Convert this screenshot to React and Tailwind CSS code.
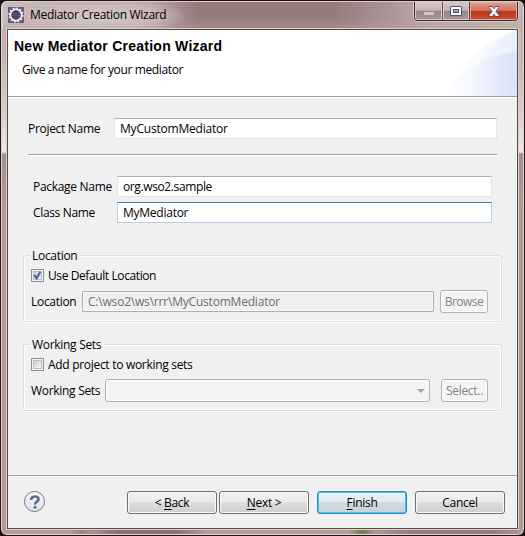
import React from "react";

function Label({ className = "tracking-[-0.3px]", children }) {
  return <span className={`block shrink-0 whitespace-nowrap leading-4 ${className}`}>{children}</span>;
}

function TextField({ className = "", children }) {
  return (
    <div className={`flex h-[21px] items-center rounded-[1px] border pl-[5px] ${className}`}>{children}</div>
  );
}

const idle = "border-[#e2e3ea] border-t-[#abadb3] bg-white";
const focused = "border-[#b5cfe7] border-t-[#3d7bad] bg-white";

function Rule({ className = "" }) {
  return <div className={`h-[2px] shrink-0 border-t border-[#a0a0a0] bg-white ${className}`} />;
}

const plainButton =
  "border-[#707070] bg-[linear-gradient(to_bottom,#f2f2f2,#ebebeb_48%,#dddddd_50%,#cfcfcf)] shadow-[inset_0_0_0_1px_#fafafa]";
const defaultButton =
  "border-[#3a85b0] bg-[linear-gradient(to_bottom,#edf2f5,#e3ebf0_48%,#d2dce3_50%,#c6d1d8)] shadow-[inset_0_0_0_1px_#35c9f5]";

function Button({ className = "", tone = plainButton, children }) {
  return (
    <div className={`flex h-[23px] w-[90px] items-center justify-center rounded-[3px] border ${tone} ${className}`}>
      {children}
    </div>
  );
}

function DisabledButton({ className = "", children }) {
  return (
    <div className={`flex h-[23px] items-center justify-center rounded-[3px] border border-[#adb2b5] bg-[#f4f4f4] text-[#838383] shadow-[inset_0_0_0_1px_#fcfcfc] ${className}`}>
      {children}
    </div>
  );
}

function Group({ title, children }) {
  return (
    <div className="relative ml-[15px] h-[67px] w-[479px] rounded-[3px] border border-[#d5dfe5] shadow-[inset_0_0_0_1px_#fff,0_1px_0_#fff]">
      <div className="absolute -top-2 left-[6px] bg-[#f0f0f0] pl-[2px] pr-[3px]">
        <Label>{title}</Label>
      </div>
      {children}
    </div>
  );
}

function Checkbox({ checked }) {
  return (
    <div className="h-[13px] w-[13px] shrink-0 border border-[#8e8f8f] bg-[#f4f4f4] p-px">
      <div className="h-[9px] w-[9px] border border-[#b9bec5] bg-linear-to-br from-[#cbd0d6] to-[#f6f6f6]">
        {checked && (
          <svg viewBox="0 0 9 9" className="-mt-px -ml-px block h-[9px] w-[9px] overflow-visible">
            <path d="M1.2 3.8 L3.7 7.3 L7.4 0.7" fill="none" stroke="#4b61a0" strokeWidth="2.1" />
          </svg>
        )}
      </div>
    </div>
  );
}

function EclipseIcon() {
  return (
    <svg viewBox="0 0 16 16" className="h-4 w-4 shrink-0">
      <rect width="16" height="16" fill="#67568d" />
      <circle cx="8" cy="8" r="6.9" fill="none" stroke="#f3f2f0" strokeWidth="1.4" strokeDasharray="1.9 1.71" />
      <circle cx="8" cy="8" r="5.6" fill="#453b58" stroke="#f0efed" strokeWidth="1.7" />
      <path d="M4 6.4h8M3.7 8.4h8.6M4.2 10.2h7.6" stroke="#73658b" strokeWidth=".7" />
    </svg>
  );
}

function WindowControls() {
  return (
    <div className="mr-[5px] flex h-[19px] w-[104px] overflow-hidden rounded-b-[4px] border border-t-0 border-[#352e30] shadow-[0_0_0_1px_#d8c9c9]">
      <div className="flex w-[28px] items-end justify-center border-r border-[#5d5254] bg-[linear-gradient(to_bottom,#d8c9ca,#c2b2b4_46%,#988589_52%,#a89599)] pb-[5px] shadow-[inset_0_0_0_1px_#d8cccc]">
        <div className="h-[3px] w-[10px] bg-[#d0c8c9]" />
      </div>
      <div className="flex w-[27px] items-center justify-center border-r border-[#5d3434] bg-[linear-gradient(to_bottom,#d8c9ca,#c2b2b4_46%,#988589_52%,#a89599)] shadow-[inset_0_0_0_1px_#d8cccc]">
        <svg viewBox="0 0 12 10" className="h-[10px] w-3">
          <rect x=".5" y=".5" width="11" height="9" rx=".5" fill="#f7f7f7" stroke="#50546a" />
          <rect x="3.5" y="3.5" width="5" height="3" fill="#a99b9f" stroke="#50546a" />
        </svg>
      </div>
      <div className="flex grow items-center justify-center bg-[linear-gradient(to_bottom,#e0a091,#d2715c_47%,#ba351a_53%,#cc4e30)] shadow-[inset_0_0_0_1px_#e2a99c]">
        <svg viewBox="0 0 12 11" className="h-[11px] w-3">
          <path d="M1 .5h3.500L6 2.700 7.500.5H11v1L8 5.300l3 3.900v1.300H7.500L6 8.200l-1.500 2.300H1V9.200l3-3.900-3-3.800z" fill="#f5f5f5" stroke="#5c5265" />
        </svg>
      </div>
    </div>
  );
}

function HeaderBanner() {
  return (
    <svg viewBox="0 0 80 66" className="h-[66px] w-20">
      <defs>
        <linearGradient id="sweep" gradientUnits="userSpaceOnUse" x1="8" x2="80">
          <stop offset="0" stopColor="#ffffff" />
          <stop offset="1" stopColor="#f0f4fc" />
        </linearGradient>
        <linearGradient id="crest" gradientUnits="userSpaceOnUse" x1="36" x2="80">
          <stop offset="0" stopColor="#f8faff" />
          <stop offset="1" stopColor="#e8eefa" />
        </linearGradient>
        <linearGradient id="hill" gradientUnits="userSpaceOnUse" x1="8" x2="80">
          <stop offset="0" stopColor="#ffffff" />
          <stop offset=".4" stopColor="#f3f6fd" />
          <stop offset=".85" stopColor="#dfe6f8" />
          <stop offset="1" stopColor="#dbe2f6" />
        </linearGradient>
      </defs>
      <path d="M10 66C20 38 45 9 80 1V66z" fill="url(#sweep)" />
      <path d="M36 46C48 22 62 5 80 1V66H36z" fill="url(#crest)" />
      <path d="M5 66C24 43 50 22 80 22V66z" fill="url(#hill)" />
    </svg>
  );
}

function HelpIcon() {
  return (
    <div className="flex h-[21px] w-[21px] items-center justify-center rounded-full border-[1.5px] border-[#66799b] bg-linear-to-b from-[#f8f8f8] to-[#e2e2e2]">
      <svg viewBox="0 0 12 14" className="h-[14px] w-3">
        <path d="M2.200 4.900C2.200 0.600 9.600 0.500 9.600 4.300C9.600 6.700 6 6.500 6 9.600" fill="none" stroke="#5c7196" strokeWidth="2.600" />
        <circle cx="6" cy="12.300" r="1.500" fill="#5c7196" />
      </svg>
    </div>
  );
}

export default function App() {
  return (
    <div className="h-[536px] w-[525px] overflow-hidden bg-[#1c1517] font-['Open_Sans','Noto_Sans',sans-serif] text-[12px] text-black">
      <div className="flex h-[536px] w-[525px] flex-col rounded-[7px] border border-[#1e1618] bg-[linear-gradient(to_bottom,#c1afae_0px,#c6b5b3_60px,#d8cbc8_110px,#f1eae7_151px,#a59092_153px,#b49b95_220px,#b49b95_100%)] pl-px shadow-[inset_0_0_0_1px_#e0d3d0]">
        <div className="mr-px flex h-[28px] shrink-0 items-start justify-between rounded-t-[5px] border-t border-l border-[#d9cccb] bg-[radial-gradient(ellipse_90px_18px_at_95px_14px,#d4c8c6_0%,#c9bab9_60%,transparent_100%),linear-gradient(to_bottom,transparent_60%,#b8a5a066),linear-gradient(to_right,#c9baba_0px,#b7a3a3_150px,#967b7b_195px,#967b7b_330px,#bda9aa_430px,#c3b2b1_100%)]">
          <div className="flex gap-[6px] pt-[5px] pl-[5px]">
            <EclipseIcon />
            <Label>Mediator Creation Wizard</Label>
          </div>
          <WindowControls />
        </div>

        <div className="ml-[5px] flex h-[500px] w-[511px] shrink-0 flex-col border border-[#5a4a4b] bg-[#f0f0f0] shadow-[0_0_0_1px_#dccfcd]">
          <div className="flex h-[66px] shrink-0 justify-between bg-white">
            <div className="pt-[8px] pl-[6px]">
              <Label className="font-['Liberation_Sans',Arial,sans-serif] text-[14px] font-bold tracking-[0.25px]">New Mediator Creation Wizard</Label>
              <Label className="mt-[8px] pl-2 tracking-[-0.36px]">Give a name for your mediator</Label>
            </div>
            <HeaderBanner />
          </div>
          <Rule />

          <div className="mt-[20px] flex items-center pl-[20px]">
            <Label className="w-[86px] tracking-[-0.3px]">Project Name</Label>
            <TextField className={`w-[383px] ${idle}`}><Label className="tracking-[-0.2px]">MyCustomMediator</Label></TextField>
          </div>
          <Rule className="mt-[15px] ml-5 w-[469px]" />

          <div className="mt-[20px] flex items-center pl-[25px]">
            <Label className="w-[84px] tracking-[-0.3px]">Package Name</Label>
            <TextField className={`w-[375px] ${idle}`}><Label className="tracking-[-0.38px]">org.wso2.sample</Label></TextField>
          </div>
          <div className="mt-[5px] flex items-center pl-[25px]">
            <Label className="w-[84px] tracking-[-0.35px]">Class Name</Label>
            <TextField className={`w-[375px] ${focused}`}><Label className="tracking-[-0.25px]">MyMediator</Label></TextField>
          </div>

          <div className="mt-[32px]">
            <Group title="Location">
              <div className="mt-[13px] flex h-[13px] items-center gap-1 pl-[7px]">
                <Checkbox checked />
                <Label className="tracking-[-0.4px]">Use Default Location</Label>
              </div>
              <div className="mt-[8px] flex items-center pl-[7px]">
                <Label className="w-[51px] tracking-[-0.3px]">Location</Label>
                <TextField className="w-[352px] border-[#afafaf] bg-[#f0f0f0] text-[#6d6d6d] shadow-[inset_0_0_0_1px_#fafafa]"><Label className="tracking-[-0.2px]">C:\wso2\ws\rrr\MyCustomMediator</Label></TextField>
                <DisabledButton className="ml-[6px] w-[48px]"><Label className="tracking-[-0.5px]">Browse</Label></DisabledButton>
              </div>
            </Group>
          </div>

          <div className="mt-[22px]">
            <Group title="Working Sets">
              <div className="mt-[13px] flex h-[13px] items-center gap-1 pl-[7px]">
                <Checkbox />
                <Label>Add project to working sets</Label>
              </div>
              <div className="mt-[8px] flex items-center pl-[7px]">
                <Label className="w-[74px] tracking-[-0.3px]">Working Sets</Label>
                <div className="flex h-[23px] w-[325px] items-center justify-end rounded-[3px] border border-[#adb2b5] bg-[#f4f4f4] pr-[4px] shadow-[inset_0_0_0_1px_#fcfcfc]">
                  <div className="h-0 w-0 border-x-4 border-t-4 border-x-transparent border-t-[#a5a5a5]" />
                </div>
                <DisabledButton className="ml-[11px] w-[47px]"><Label>Select..</Label></DisabledButton>
              </div>
            </Group>
          </div>

          <Rule className="mt-auto" />
          <div className="flex h-[51px] shrink-0 items-start pt-[14px] pl-[16px]">
            <HelpIcon />
            <div className="ml-[82px] flex">
              <Button><Label>&lt; <u className="underline-offset-2">B</u>ack</Label></Button>
              <Button className="ml-[2px]"><Label className="tracking-[-0.3px]"><u className="underline-offset-2">N</u>ext &gt;</Label></Button>
              <Button className="ml-2" tone={defaultButton}><Label><u className="underline-offset-2">F</u>inish</Label></Button>
              <Button className="ml-2"><Label>Cancel</Label></Button>
            </div>
          </div>
        </div>
        <div className="mx-[6px] mt-px h-[4px] bg-[radial-gradient(ellipse_12px_6px_at_74px_2px,#a07f78,transparent),radial-gradient(ellipse_60px_8px_at_138px_2px,#8b6f76_50%,transparent),radial-gradient(ellipse_13px_6px_at_354px_2px,#7d7d50_20%,transparent),radial-gradient(ellipse_80px_8px_at_442px_2px,#957a80_50%,transparent)]" />
      </div>
    </div>
  );
}
